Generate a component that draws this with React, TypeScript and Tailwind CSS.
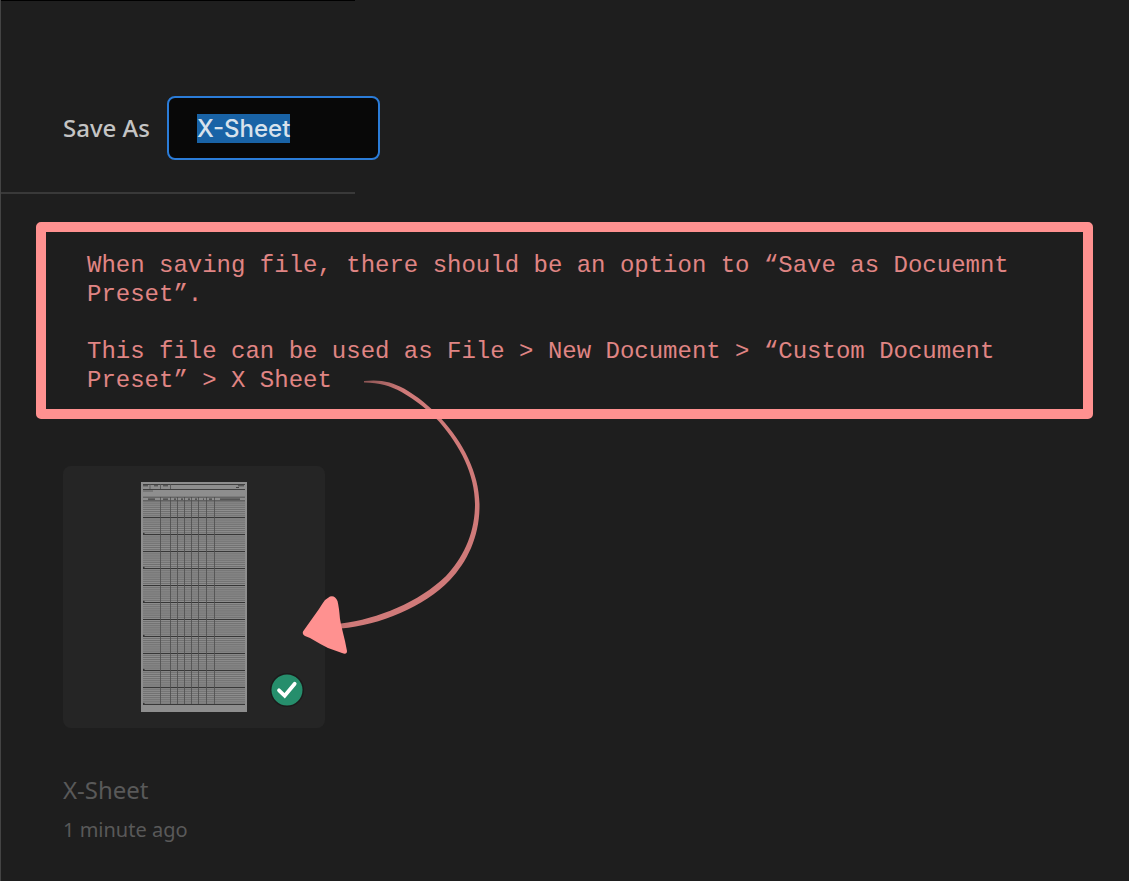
import { useEffect, useRef } from "react";
import type { ReactElement } from "react";

const COLUMN_LINES = [20, 30, 37, 44, 51, 58, 66, 74];
const HEADINGS: [number, number][] = [
  [7, 7],
  [22, 5],
  [33, 2],
  [40, 2],
  [47, 2],
  [54, 2],
  [62, 1],
  [68, 3],
  [79, 20],
];
const GRID_TOP = 19;
const ROW_COUNT = 96;
const GRID_HEIGHT = 203;

function SheetThumbnail(): ReactElement {
  const rows = Array.from({ length: ROW_COUNT + 1 }, (_, i) => GRID_TOP + (i * GRID_HEIGHT) / ROW_COUNT);
  return (
    <svg viewBox="0 0 106 230" className="h-[230px] w-[106px]" role="img" aria-label="X-Sheet preview">
      <rect width="106" height="230" fill="#8e8e8e" />
      <path d="M2 2.5H104M2 7.5H104" stroke="#404040" strokeWidth="1" />
      <path d="M9 2V7M19.500 2V7M29.5 2V7" stroke="#505050" strokeWidth="0.8" />
      <path d="M2 3.8H7M13 3.8H17M22 3.8H27M97 3.8H103M95 5.500H98" stroke="#383838" strokeWidth="0.9" />
      <path d="M2 9H12" stroke="#555" strokeWidth="0.8" />
      <path d="M2 15.200H104M2 18.8H104" stroke="#454545" strokeWidth="0.8" />
      {HEADINGS.map(([x, w]) => (
        <rect key={x} x={x} y="16.6" width={w} height="1" fill="#303030" />
      ))}
      {rows.map((y, i) => (
        <path key={i} d={`M2 ${y}H104`} stroke="#5a5a5a" strokeWidth="0.6" />
      ))}
      {Array.from({ length: 12 }, (_, i) => (
        <path key={i} d={`M2 ${35.5 + i * 17}H104`} stroke="#303030" strokeWidth="0.9" />
      ))}
      {Array.from({ length: 6 }, (_, i) => (
        <circle key={i} cx="2.8" cy={51.5 + i * 34} r="0.8" fill="#2c2c2c" />
      ))}
      {COLUMN_LINES.map((x) => (
        <path key={x} d={`M${x - 0.5} 15V222`} stroke="#4c4c4c" strokeWidth="0.8" />
      ))}
    </svg>
  );
}

function CheckBadge(): ReactElement {
  return (
    <svg viewBox="0 0 34 34" className="absolute right-[21px] bottom-[21px] size-[34px]" role="img" aria-label="Selected">
      <circle cx="17" cy="17" r="17" fill="#1b1b1b" />
      <circle cx="17" cy="17" r="15.5" fill="#268e6c" />
      <path
        d="M9 17.3L14.7 22.8L24.7 10.7"
        fill="none"
        stroke="#fff"
        strokeWidth="3.7"
        strokeLinecap="round"
      />
    </svg>
  );
}

function CurvedArrow(): ReactElement {
  return (
    <svg
      viewBox="300 376 182 284"
      className="pointer-events-none absolute -top-[90px] left-[237px] h-[284px] w-[182px]"
      aria-hidden="true"
    >
      <defs>
        <linearGradient id="tail" gradientUnits="userSpaceOnUse" x1="364" y1="381" x2="404" y2="390">
          <stop offset="0" stopColor="#8a5453" />
          <stop offset="1" stopColor="#d07a79" />
        </linearGradient>
      </defs>
      <path
        d="M364 381C380 379 392 382 404 388.5C417 396 430 406.500 441 418.500C463 442 479 473 479.500 504C480 535 468 561 450 580C424 607 380 625 341 628.500V623.500C378 619 419 602 446 576C463 558 475 534 475 504C475 475 460.500 446 439 421.500C428 409.500 416 400.500 401.500 392C390 386 380 382.500 364 382.500Z"
        fill="url(#tail)"
      />
      <path
        d="M303 631.500Q302 634 305 636L310 638Q320 644 328 648L342 653Q347 655 347 651L345 641Q341 625 340 619Q339 607 337.500 601Q335 595 330 596.500L325 600Q322 604 319 609Z"
        fill="#ff9190"
      />
      <path d="M424 409H450V419H433Z" fill="#ff9190" />
    </svg>
  );
}

export default function App(): ReactElement {
  const nameRef = useRef<HTMLInputElement>(null);

  useEffect(() => {
    nameRef.current?.focus();
    nameRef.current?.select();
  }, []);

  return (
    <main className="min-h-screen border-l border-[#444444] bg-[#1e1e1e] font-['Noto_Sans',sans-serif]">
      <header className="w-[354px] border-t border-b-2 border-t-black border-b-[#393939] pt-[95px] pb-8">
        <form className="flex w-max items-center gap-4 pl-[62px]" onSubmit={(e) => e.preventDefault()}>
          <label htmlFor="preset-name" className="w-[88px] text-2xl font-medium whitespace-nowrap text-[#c4c4c4]">
            Save As
          </label>
          <input
            id="preset-name"
            ref={nameRef}
            type="text"
            defaultValue="X-Sheet"
            className="h-16 w-[213px] rounded-lg border-2 border-[#2b7cd8] bg-[#080808] px-7 font-['Inter',sans-serif] text-2xl font-medium text-[#d8e2ec] outline-none selection:bg-[#1963a6] selection:text-[#d8e2ec]"
          />
        </form>
      </header>

      <section className="mt-7 mr-9 ml-[35px] rounded-[5px] border-10 border-[#ff9190] pt-[19px] pr-10 pb-[13px] pl-[41px] font-['Liberation_Mono',monospace] text-2xl leading-[29px] text-[#e08584]">
        <p className="mb-7">When saving file, there should be an option to “Save as Docuemnt Preset”.</p>
        <p className="pb-px">This file can be used as File &gt; New Document &gt; “Custom Document Preset” &gt; X Sheet</p>
      </section>

      <figure className="relative mt-[47px] ml-[62px] w-[262px] pb-8">
        <div className="relative flex h-[262px] items-start justify-center rounded-lg bg-[#252525] pt-4">
          <SheetThumbnail />
          <CheckBadge />
        </div>
        <CurvedArrow />
        <figcaption className="mt-11 text-[#595959]">
          <h2 className="text-2xl leading-9">X-Sheet</h2>
          <p className="mt-1 text-xl leading-9">1 minute ago</p>
        </figcaption>
      </figure>
    </main>
  );
}
